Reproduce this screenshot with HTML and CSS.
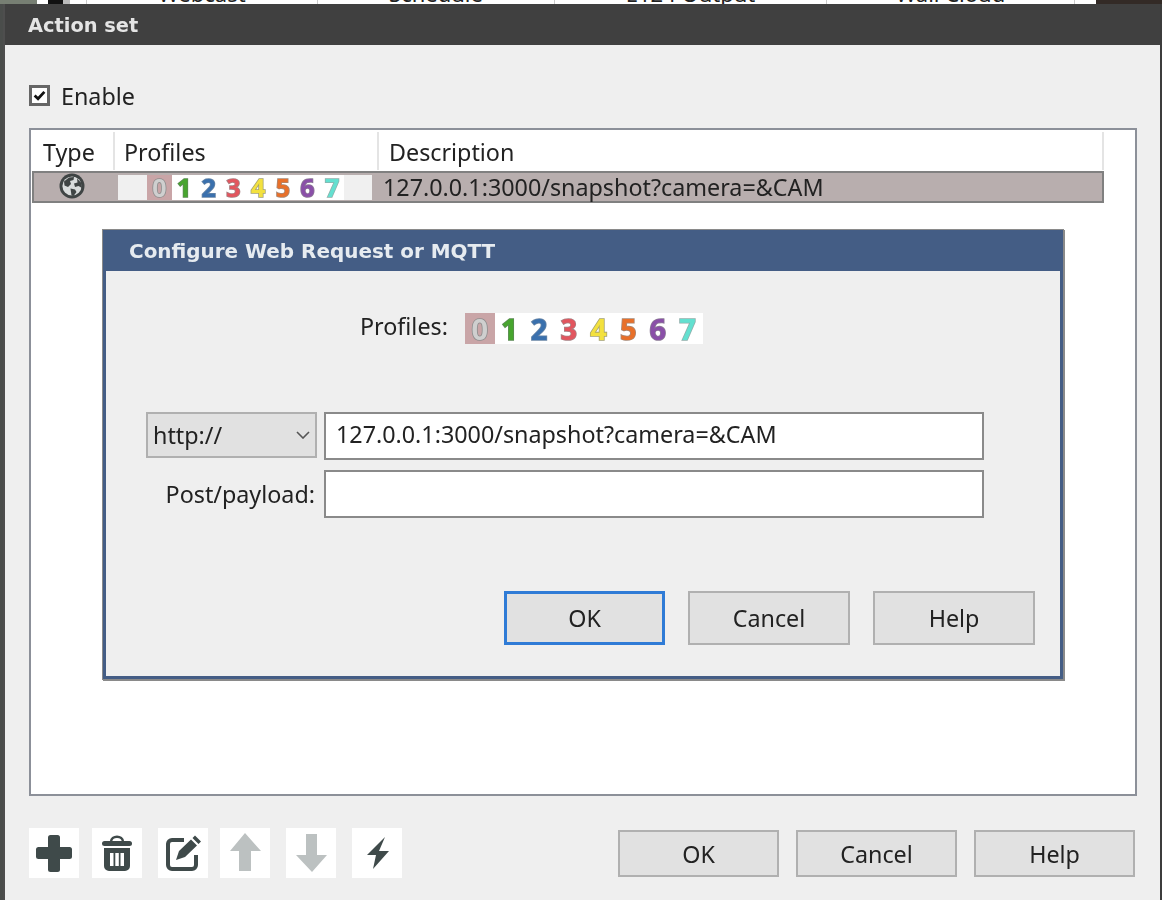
FILE: index.html
```html
<!DOCTYPE html>
<html lang="en">
<head>
<meta charset="utf-8">
<title>Action set</title>
<link rel="stylesheet" href="styles.css">
</head>
<body>
<div class="backdrop">
  <div class="bd bd-a"></div><div class="bd bd-b"></div><div class="bd bd-b2"></div><div class="bd bd-c"><span>Webcast</span></div><div class="bd bd-d"><span>Schedule</span></div><div class="bd bd-e"><span>E124 Output</span></div><div class="bd bd-f"><span>Wall Cloud</span></div><div class="bd bd-f2"></div><div class="bd bd-g"></div>
</div>
<main class="window">
  <header class="titlebar">Action set</header>
  <div class="content">
    <label class="enable">
      <span class="check"><svg viewBox="0 0 16 16" width="16" height="16"><path d="M2 8 6.200 12 14 3.500" fill="none" stroke="#111" stroke-width="3.400"/></svg></span>
      <span>Enable</span>
    </label>
    <section class="list">
      <div class="list-head">
        <div class="hcell hc-type">Type</div>
        <div class="hcell hc-prof">Profiles</div>
        <div class="hcell hc-desc">Description</div>
      </div>
      <div class="list-row">
        <div class="rc-type">
          <svg viewBox="0 0 26 26" width="26" height="26"><circle cx="13" cy="13" r="12.500" fill="#3f4444"/><circle cx="13" cy="13" r="9.600" fill="#d9dcdc"/><path d="M5 8.500 10 4.500 15 4 14.500 7 11 8 12 11 9 14 5.500 12.500ZM18 5.500 22.500 10 23 15 19.500 13 16 14 15 10.500 18.500 9.500ZM11.500 15.500 16 16.500 17.500 19 14.500 23 12.500 22.500 12 19Z" fill="#3f4444"/></svg>
        </div>
        <div class="strip strip-row">
          <span class="d d0 on">0</span><span class="d d1">1</span><span class="d d2">2</span><span class="d d3">3</span><span class="d d4">4</span><span class="d d5">5</span><span class="d d6">6</span><span class="d d7">7</span>
        </div>
        <div class="rc-desc">127.0.0.1:3000/snapshot?camera=&amp;CAM</div>
      </div>

      <div class="dialog">
        <header class="dlg-title">Configure Web Request or MQTT</header>
        <div class="dlg-body">
          <div class="dlg-prof">
            <span class="dlg-prof-label">Profiles:</span>
            <div class="strip strip-dlg">
              <span class="d d0 on">0</span><span class="d d1">1</span><span class="d d2">2</span><span class="d d3">3</span><span class="d d4">4</span><span class="d d5">5</span><span class="d d6">6</span><span class="d d7">7</span>
            </div>
          </div>
          <div class="form">
            <div class="select"><span>http://</span>
              <svg viewBox="0 0 14 8" width="14" height="8"><path d="M1 1 7 7 13 1" fill="none" stroke="#555" stroke-width="1.600"/></svg>
            </div>
            <div class="input">127.0.0.1:3000/snapshot?camera=&amp;CAM</div>
            <div class="form-label">Post/payload:</div>
            <div class="input"></div>
          </div>
          <div class="dlg-actions">
            <button class="btn btn-dlg btn-focus">OK</button>
            <button class="btn btn-dlg">Cancel</button>
            <button class="btn btn-dlg">Help</button>
          </div>
        </div>
      </div>
    </section>
    <footer class="footer">
      <div class="tools">
        <div class="tool"><svg viewBox="0 0 50 50" width="50" height="50"><rect x="19" y="7" width="12" height="37" rx="2.500" fill="#3f4a4a"/><rect x="7" y="19" width="36" height="12" rx="2.500" fill="#3f4a4a"/></svg></div>
        <div class="tool"><svg viewBox="0 0 50 50" width="50" height="50"><path d="M19 14c0-7 12-7 12 0" fill="none" stroke="#3f4a4a" stroke-width="2.500"/><rect x="10" y="13" width="30" height="5" rx="2.500" fill="#3f4a4a"/><path d="M12 20H38V38a5 5 0 0 1-5 5H17a5 5 0 0 1-5-5ZM18 25V38H21.500V25ZM23.300 25V38H26.800V25ZM28.500 25V38H32V25Z" fill="#3f4a4a" fill-rule="evenodd"/></svg></div>
        <div class="tool"><svg viewBox="0 0 50 50" width="50" height="50"><path d="M26 12H14a4 4 0 0 0-4 4V37a4 4 0 0 0 4 4H34a4 4 0 0 0 4-4V27" fill="none" stroke="#3f4a4a" stroke-width="4"/><path d="M18 32 21 23 33 11.500 39 17.500 27 29ZM34.500 10 37 7.500 43 13.500 40.500 16Z" fill="#3f4a4a"/></svg></div>
        <div class="tool"><svg viewBox="0 0 50 50" width="50" height="50"><path d="M25 5 41 23H31V43H19V23H10Z" fill="#bcc1c1"/></svg></div>
        <div class="tool"><svg viewBox="0 0 50 50" width="50" height="50"><path d="M20 6H31V27H41L26 44 10 27H20Z" fill="#bcc1c1"/></svg></div>
        <div class="tool"><svg viewBox="0 0 50 50" width="50" height="50"><path d="M33 9 15 27H24L21 41 37 23H27Z" fill="#3f4a4a"/></svg></div>
      </div>
      <div class="actions">
        <button class="btn btn-main">OK</button>
        <button class="btn btn-main">Cancel</button>
        <button class="btn btn-main">Help</button>
      </div>
    </footer>
  </div>
</main>
</body>
</html>
```

FILE: styles.css
```css
* { box-sizing: border-box; }
html, body { margin: 0; padding: 0; }
body {
  width: 1162px;
  height: 900px;
  overflow: hidden;
  background: #4a4d4b;
  font-family: "Noto Sans", "Open Sans", sans-serif;
  color: #222;
  font-size: 23.3px;
}
.backdrop { display: flex; height: 4px; overflow: hidden; background: #fff; }
.bd { height: 4px; overflow: hidden; border-right: 1px solid #ccc; }
.bd span { display: block; margin-top: -19px; line-height: 24px; font-size: 22px; text-align: center; }
.bd-a { width: 37px; background: #777f73; border: 0; }
.bd-b { width: 33px; background: #111; border-left: 11px solid #fff; border-right: 7px solid #bbb; }
.bd-b2 { width: 17px; }
.bd-c { width: 231px; }
.bd-d { width: 237px; }
.bd-e { width: 272px; }
.bd-f { width: 248px; }
.bd-f2 { width: 21px; border: 0; }
.bd-g { flex: 1; background: #332a26; border: 0; }

.window {
  margin-left: 3px;
  width: 1159px;
  height: 896px;
  border-left: 2px solid #4e4e4e;
  border-right: 2px solid #3c3c3c;
  background: #efefef;
  filter: blur(0.35px);
}
.titlebar {
  height: 41px;
  background: #404040;
  color: #e4e4e4;
  font-family: "DejaVu Sans", sans-serif;
  font-weight: 700;
  font-size: 19.4px;
  line-height: 43px;
  padding-left: 23px;
}
.content { padding: 40px 23px 0 24px; }
.enable { display: flex; align-items: center; gap: 11px; height: 21px; }
.check {
  width: 21px; height: 21px;
  border: 3px solid #666;
  background: #fff;
  display: flex; align-items: center; justify-content: center;
}
.check svg { flex: none; width: 13px; height: 13px; }
.list {
  position: relative;
  margin-top: 22px;
  height: 668px;
  background: #fff;
  border: 2px solid #8c9099;
}
.list-head { display: flex; height: 40px; }
.hcell { border-right: 2px solid #e4e4e4; height: 38px; margin-top: 2px; line-height: 40px; }
.hc-type { width: 84px; padding-left: 12px; }
.hc-prof { width: 264px; padding-left: 9px; }
.hc-desc { width: 725px; padding-left: 10px; }
.list-row {
  display: flex;
  align-items: center;
  margin-left: 1px;
  width: 1072px;
  height: 32px;
  margin-top: 1px;
  background: #b8aeae;
  border: 2px solid #808080;
}
.rc-type { width: 84px; height: 28px; display: flex; padding-left: 25px; }
.rc-desc { margin-left: 11px; line-height: 28px; white-space: nowrap; }
.strip { display: flex; background: #fff; }
.strip-row { width: 254px; height: 25px; padding-left: 29px; background: linear-gradient(90deg, #f0f0f0 30px, #fff 30px, #fff 226px, #f0f0f0 226px); margin-top: 1px; }
.dlg-prof-label { line-height: 31px; margin-top: -4px; }
.strip-dlg { width: 238px; height: 31px; margin-left: 17px; }
.d {
  font-family: "Noto Sans", sans-serif;
  font-weight: 700;
  text-align: center;
  -webkit-text-stroke: 1.6px #8d8d8d;
  paint-order: stroke fill;
}
.strip-row .d { width: 24.7px; font-size: 25px; line-height: 25px; }
.strip-dlg .d { width: 29.7px; font-size: 29px; line-height: 31px; }
.d.on { background: #c9a5a7; }
.d0 { color: #cfcfcf; }
.d1 { color: #47a52e; -webkit-text-stroke-color: #5c8a55; }
.d2 { color: #3a70ad; -webkit-text-stroke-color: #6b87a6; }
.d3 { color: #e2555e; -webkit-text-stroke-color: #a88184; }
.d4 { color: #f3e13e; -webkit-text-stroke-color: #a5a270; }
.d5 { color: #e8702a; -webkit-text-stroke-color: #a88a78; }
.d6 { color: #8a4fa8; -webkit-text-stroke-color: #8c7a96; }
.d7 { color: #63e0d0; -webkit-text-stroke-color: #8fb0ac; }

.dialog {
  position: absolute;
  left: 72px;
  top: 100px;
  width: 960px;
  height: 449px;
  background: #efefef;
  border: 3px solid #445d85;
  border-top: 0;
  box-shadow: 0 0 0 1px #8a8a8a, 1px 1px 0 1px #8a8a8a;
}
.dlg-title {
  height: 41px;
  margin: 0 -3px;
  background: #445d85;
  color: #e6ebf0;
  font-family: "DejaVu Sans", sans-serif;
  font-weight: 700;
  font-size: 19.95px;
  line-height: 43px;
  padding-left: 26px;
}
.dlg-body { padding-top: 42px; }
.dlg-prof { display: flex; align-items: center; height: 31px; padding-left: 254px; }
.form {
  display: grid;
  grid-template-columns: 171px 660px;
  column-gap: 7px;
  row-gap: 10px;
  margin: 68px 0 0 40px;
}
.select {
  height: 46px;
  background: #e1e1e1;
  border: 2px solid #b0b0b0;
  display: flex; align-items: center; justify-content: space-between;
  padding: 0 5px 0 5px;
}
.input { height: 48px; background: #fff; border: 2px solid #8a8a8a; padding-left: 10px; line-height: 41px; white-space: nowrap; }
.form-label { text-align: right; line-height: 48px; padding-right: 2px; }
.dlg-actions { display: flex; justify-content: flex-end; gap: 23px; margin: 73px 25px 0 0; }
.btn {
  font: inherit;
  color: inherit;
  background: #e1e1e1;
  border: 2px solid #b0b0b0;
  padding: 0;
}
.btn-dlg { width: 162px; height: 54px; }
.btn-focus { width: 161px; border: 3px solid #2f7bd6; }
.footer { display: flex; align-items: center; justify-content: space-between; margin-top: 32px; padding-right: 2px; }
.tools { display: grid; grid-template-columns: 63px 66px 62px 66px 66px 50px; }
.tool { width: 50px; height: 50px; background: #fff; }
.tool svg { display: block; }
.actions { display: flex; gap: 17px; }
.btn-main { width: 161px; height: 47px; padding-top: 2px; }
```
